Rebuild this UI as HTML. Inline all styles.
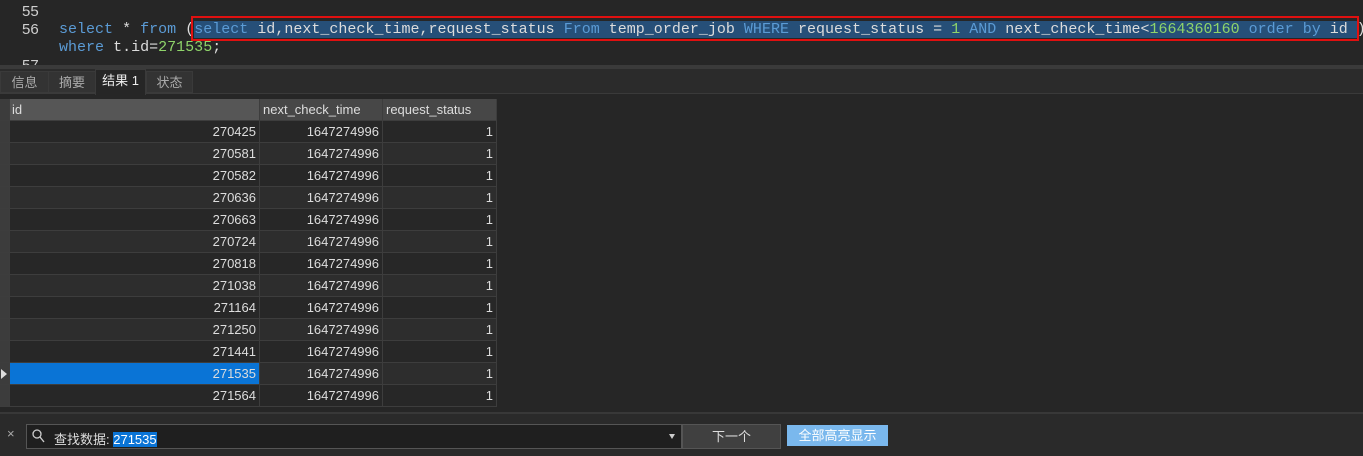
<!DOCTYPE html><html><head><style>
*{margin:0;padding:0;box-sizing:border-box}
body{width:1363px;height:456px;background:#262626;overflow:hidden;position:relative;font-family:"Liberation Sans","Noto Sans CJK SC",sans-serif;color:#ddd}
.ed{position:absolute;left:0;top:0;width:1363px;height:66px;background:#262626;font-family:"Liberation Mono",monospace;font-size:15px;color:#dcdcdc}
.ln{position:absolute;left:22px;color:#cfcfcf;font-family:"Liberation Sans",sans-serif;font-size:15px}
.code{position:absolute;left:59px;white-space:pre;letter-spacing:0.01px}
.k{color:#5b9bd5}.n{color:#8fd46a}
.sel{background:#264f78}
.split{position:absolute;left:0;top:65px;width:1363px;height:4px;background:#3a3a3a}
.tabs{position:absolute;left:0;top:69px;width:1363px;height:25px;background:#2b2b2b;border-bottom:1px solid #3a3a3a}
.tab{position:absolute;top:2px;height:22px;border:1px solid #3a3a3a;background:#333;color:#aaa;font-size:13px;line-height:21px;text-align:center}
.grid{position:absolute;left:0;top:99px}
.row{position:absolute;left:0;height:22px;width:497px}
.c{position:absolute;top:0;height:22px;border-right:1px solid #3d3d3d;border-bottom:1px solid #3d3d3d;font-size:13px;line-height:22px;text-align:right;padding-right:3px;color:#ddd}
.bot{position:absolute;left:0;top:412px;width:1363px;height:44px;background:#2a2a2a;border-top:2px solid #383838}
</style></head><body>
<div class="ed">
<div class="ln" style="top:3px">55</div>
<div class="ln" style="top:21px">56</div>
<div class="ln" style="top:57px">57</div>
<div class="code" style="top:21px"><span class="k">select</span> * <span class="k">from</span> (<span class="sel"><span class="k">select</span> id,next_check_time,request_status <span class="k">From</span> temp_order_job <span class="k">WHERE</span> request_status = <span class="n">1</span> <span class="k">AND</span> next_check_time&lt;<span class="n">1664360160</span> <span class="k">order by</span> id </span>)</div>
<div class="code" style="top:39px"><span class="k">where</span> t.id=<span class="n">271535</span>;</div>
<div style="position:absolute;left:191px;top:16px;width:1168px;height:25px;border:2px solid #e01010"></div>
</div>
<div class="split"></div>
<div class="tabs">
<div class="tab" style="left:0;width:49px">信息</div>
<div class="tab" style="left:48px;width:48px">摘要</div>
<div class="tab" style="left:95px;width:51px;top:0;height:26px;background:#262626;color:#eee;border-bottom:none">结果 1</div>
<div class="tab" style="left:146px;width:47px">状态</div>
</div>
<div class="grid">
<div class="row" style="top:0;height:22px">
<div class="c" style="left:0;width:10px;background:#3c3c3c"></div>
<div class="c" style="left:10px;width:250px;background:#565656;text-align:left;padding-left:2px">id</div>
<div class="c" style="left:260px;width:123px;background:#474747;text-align:left;padding-left:3px">next_check_time</div>
<div class="c" style="left:383px;width:114px;background:#474747;text-align:left;padding-left:3px">request_status</div>
</div>
</div>
<div id="rows"></div>
<script>
var ids=["270425","270581","270582","270636","270663","270724","270818","271038","271164","271250","271441","271535","271564"];
var h="";
ids.forEach(function(v,i){var t=99+22+i*22;var bg=i%2?"#2d2d2d":"#272727";var sel=v=="271535";
h+='<div class="row" style="top:'+t+'px">'+
'<div class="c" style="left:0;width:10px;background:#3c3c3c">'+(sel?'<span style="position:absolute;left:1px;top:6px;border-left:6px solid #ddd;border-top:5px solid transparent;border-bottom:5px solid transparent"></span>':'')+'</div>'+
'<div class="c" style="left:10px;width:250px;background:'+(sel?'#0a74d6':bg)+'">'+v+'</div>'+
'<div class="c" style="left:260px;width:123px;background:'+bg+'">1647274996</div>'+
'<div class="c" style="left:383px;width:114px;background:'+bg+'">1</div></div>';});
document.getElementById("rows").innerHTML=h;
document.getElementById("rows").style.cssText="position:absolute;left:0;top:0";
</script>
<div class="bot">
<div style="position:absolute;left:7px;top:12px;font-size:13px;color:#aaa">×</div>
<div style="position:absolute;left:26px;top:10px;width:656px;height:25px;background:#1f1f1f;border:1px solid #555">
<svg style="position:absolute;left:5px;top:4px" width="13" height="14"><circle cx="5" cy="5" r="4" stroke="#ccc" stroke-width="1.3" fill="none"/><line x1="8" y1="8" x2="12" y2="13" stroke="#ccc" stroke-width="1.4"/></svg>
<span style="position:absolute;left:27px;top:4px;font-size:13px;color:#ddd">查找数据: <span style="background:#0a74d6;color:#fff">271535</span></span>
<span style="position:absolute;right:6px;top:9px;border-top:5px solid #ccc;border-left:3px solid transparent;border-right:3px solid transparent"></span>
</div>
<div style="position:absolute;left:682px;top:10px;width:99px;height:25px;background:#404040;border:1px solid #555;font-size:13px;line-height:23px;text-align:center;color:#ddd">下一个</div>
<div style="position:absolute;left:787px;top:11px;width:101px;height:21px;background:#7ab8ed;font-size:13px;line-height:21px;text-align:center;color:#fff">全部高亮显示</div>
</div>
</body></html>
